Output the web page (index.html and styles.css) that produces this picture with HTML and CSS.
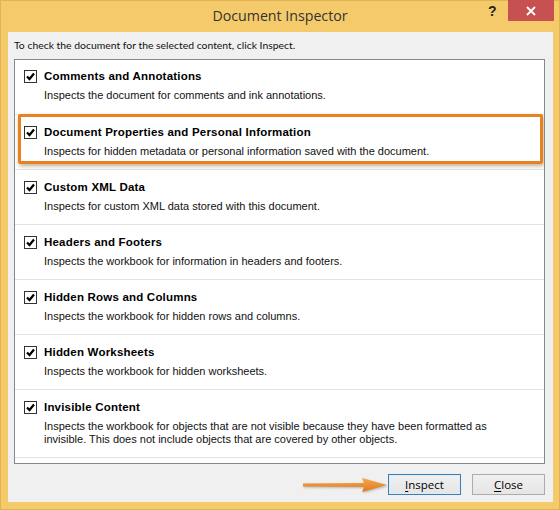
FILE: index.html
```html
<!DOCTYPE html>
<html>
<head>
<meta charset="utf-8">
<link rel="stylesheet" href="styles.css">
</head>
<body>
<div class="window">
  <div class="titlebar">
    <div class="title">Document Inspector</div>
    <div class="help">?</div>
    <div class="close-btn">
      <svg width="10" height="10" viewBox="0 0 10 10"><path d="M1 1 L9 9 M9 1 L1 9" stroke="#fff" stroke-width="1.8"/></svg>
    </div>
  </div>
  <div class="client">
    <div class="intro">To check the document for the selected content, click Inspect.</div>
    <div class="list">
      <div class="item">
        <div class="head"><span class="cb"><svg width="11" height="11" viewBox="0 0 11 11"><path d="M2 5.5 L4.5 8 L9 2.5" fill="none" stroke="#000" stroke-width="2.2"/></svg></span><span class="label">Comments and Annotations</span></div>
        <div class="desc">Inspects the document for comments and ink annotations.</div>
      </div>
      <div class="item highlighted">
        <div class="head"><span class="cb"><svg width="11" height="11" viewBox="0 0 11 11"><path d="M2 5.5 L4.5 8 L9 2.5" fill="none" stroke="#000" stroke-width="2.2"/></svg></span><span class="label">Document Properties and Personal Information</span></div>
        <div class="desc">Inspects for hidden metadata or personal information saved with the document.</div>
        <div class="hl-box"></div>
      </div>
      <div class="item">
        <div class="head"><span class="cb"><svg width="11" height="11" viewBox="0 0 11 11"><path d="M2 5.5 L4.5 8 L9 2.5" fill="none" stroke="#000" stroke-width="2.2"/></svg></span><span class="label">Custom XML Data</span></div>
        <div class="desc">Inspects for custom XML data stored with this document.</div>
      </div>
      <div class="item">
        <div class="head"><span class="cb"><svg width="11" height="11" viewBox="0 0 11 11"><path d="M2 5.5 L4.5 8 L9 2.5" fill="none" stroke="#000" stroke-width="2.2"/></svg></span><span class="label">Headers and Footers</span></div>
        <div class="desc">Inspects the workbook for information in headers and footers.</div>
      </div>
      <div class="item">
        <div class="head"><span class="cb"><svg width="11" height="11" viewBox="0 0 11 11"><path d="M2 5.5 L4.5 8 L9 2.5" fill="none" stroke="#000" stroke-width="2.2"/></svg></span><span class="label">Hidden Rows and Columns</span></div>
        <div class="desc">Inspects the workbook for hidden rows and columns.</div>
      </div>
      <div class="item">
        <div class="head"><span class="cb"><svg width="11" height="11" viewBox="0 0 11 11"><path d="M2 5.5 L4.5 8 L9 2.5" fill="none" stroke="#000" stroke-width="2.2"/></svg></span><span class="label">Hidden Worksheets</span></div>
        <div class="desc">Inspects the workbook for hidden worksheets.</div>
      </div>
      <div class="item">
        <div class="head"><span class="cb"><svg width="11" height="11" viewBox="0 0 11 11"><path d="M2 5.5 L4.5 8 L9 2.5" fill="none" stroke="#000" stroke-width="2.2"/></svg></span><span class="label">Invisible Content</span></div>
        <div class="desc">Inspects the workbook for objects that are not visible because they have been formatted as<br>invisible. This does not include objects that are covered by other objects.</div>
      </div>
    </div>
    <div class="footer">
      <div class="arrow">
        <svg width="86" height="16" viewBox="0 0 86 16">
          <defs>
            <linearGradient id="ag" x1="0" y1="0" x2="0" y2="1">
              <stop offset="0" stop-color="#f6a850"/>
              <stop offset="1" stop-color="#e0781a"/>
            </linearGradient>
          </defs>
          <path d="M1 6.5 L62 6 L60 1 L85 8 L60 15 L62 10 L1 9.5 Z" fill="url(#ag)"/>
        </svg>
      </div>
      <button class="btn default"><u>I</u>nspect</button>
      <button class="btn"><u>C</u>lose</button>
    </div>
  </div>
</div>
</body>
</html>
```
FILE: styles.css
```css
html, body {
  margin: 0;
  padding: 0;
}
body {
  width: 560px;
  height: 510px;
  overflow: hidden;
  background: #f3c96a;
}
.window {
  width: 560px;
  height: 510px;
  box-sizing: border-box;
  border: 1px solid #e2b352;
  background: #f4ca6b;
  display: flex;
  flex-direction: column;
}
.titlebar {
  height: 31px;
  position: relative;
  display: flex;
  align-items: center;
  justify-content: center;
}
.title {
  font-family: "Open Sans", "Noto Sans", sans-serif;
  font-size: 14.2px;
  color: #333;
  margin-top: -2px;
}
.help {
  position: absolute;
  left: 487px;
  top: 2px;
  font-family: "Liberation Sans", sans-serif;
  font-weight: bold;
  font-size: 14px;
  color: #222;
}
.close-btn {
  position: absolute;
  left: 507px;
  top: -1px;
  width: 46px;
  height: 21px;
  background: #c75050;
  display: flex;
  align-items: center;
  justify-content: center;
}
.client {
  margin: 0 6px 7px 7px;
  flex: 1;
  background: #f0f0f0;
  display: flex;
  flex-direction: column;
  padding: 0 8px 0 6px;
}
.intro {
  font-family: Lato, "Open Sans", sans-serif;
  font-size: 10.4px;
  color: #111;
  line-height: 16px;
  padding-top: 5px;
  height: 22px;
}
.list {
  height: 405px;
  box-sizing: border-box;
  border: 1px solid #828790;
  background: #fff;
  overflow: hidden;
}
.item {
  position: relative;
  padding: 11px 10px 11px 9px;
  border-bottom: 1px solid #e3e3e3;
  font-family: "Liberation Sans", "DejaVu Sans", sans-serif;
  font-size: 11px;
  color: #111;
}
.item:first-child {
  padding-top: 10px;
  padding-bottom: 12px;
}
.head {
  display: flex;
  align-items: center;
  height: 13px;
}
.cb {
  width: 11px;
  height: 11px;
  border: 1px solid #333;
  background: #fff;
  display: flex;
  margin-right: 7px;
}
.cb svg {
  display: block;
}
.label {
  font-weight: bold;
  font-size: 11.5px;
  letter-spacing: 0.2px;
  line-height: 13px;
  color: #000;
}
.desc {
  margin-top: 6px;
  margin-left: 20px;
  line-height: 13px;
}
.hl-box {
  position: absolute;
  left: 3px;
  top: -1px;
  width: 519px;
  height: 44px;
  border: 3px solid #ea811f;
  border-radius: 2px;
  box-shadow: 1px 2px 4px rgba(120, 70, 20, 0.45);
  pointer-events: none;
}
.footer {
  flex: 1;
  display: flex;
  align-items: center;
  justify-content: flex-end;
  gap: 11px;
  position: relative;
  padding-top: 3px;
}
.arrow {
  position: absolute;
  left: 288px;
  top: 13px;
}
.arrow svg {
  display: block;
  filter: drop-shadow(1px 1px 1px rgba(0,0,0,0.25));
}
.btn {
  width: 73px;
  height: 21px;
  box-sizing: border-box;
  border: 1px solid #acacac;
  background: linear-gradient(#f0f0f0, #e5e5e5);
  font-family: "Open Sans", "Noto Sans", sans-serif;
  font-size: 11.5px;
  color: #000;
  padding: 0;
  margin: 0;
  line-height: 18px;
}
.btn.default {
  border-color: #3c7fb1;
  box-shadow: inset 0 0 0 1px #dcecfc;
}
.btn u {
  text-decoration: underline;
  text-underline-offset: 2px;
}
```
